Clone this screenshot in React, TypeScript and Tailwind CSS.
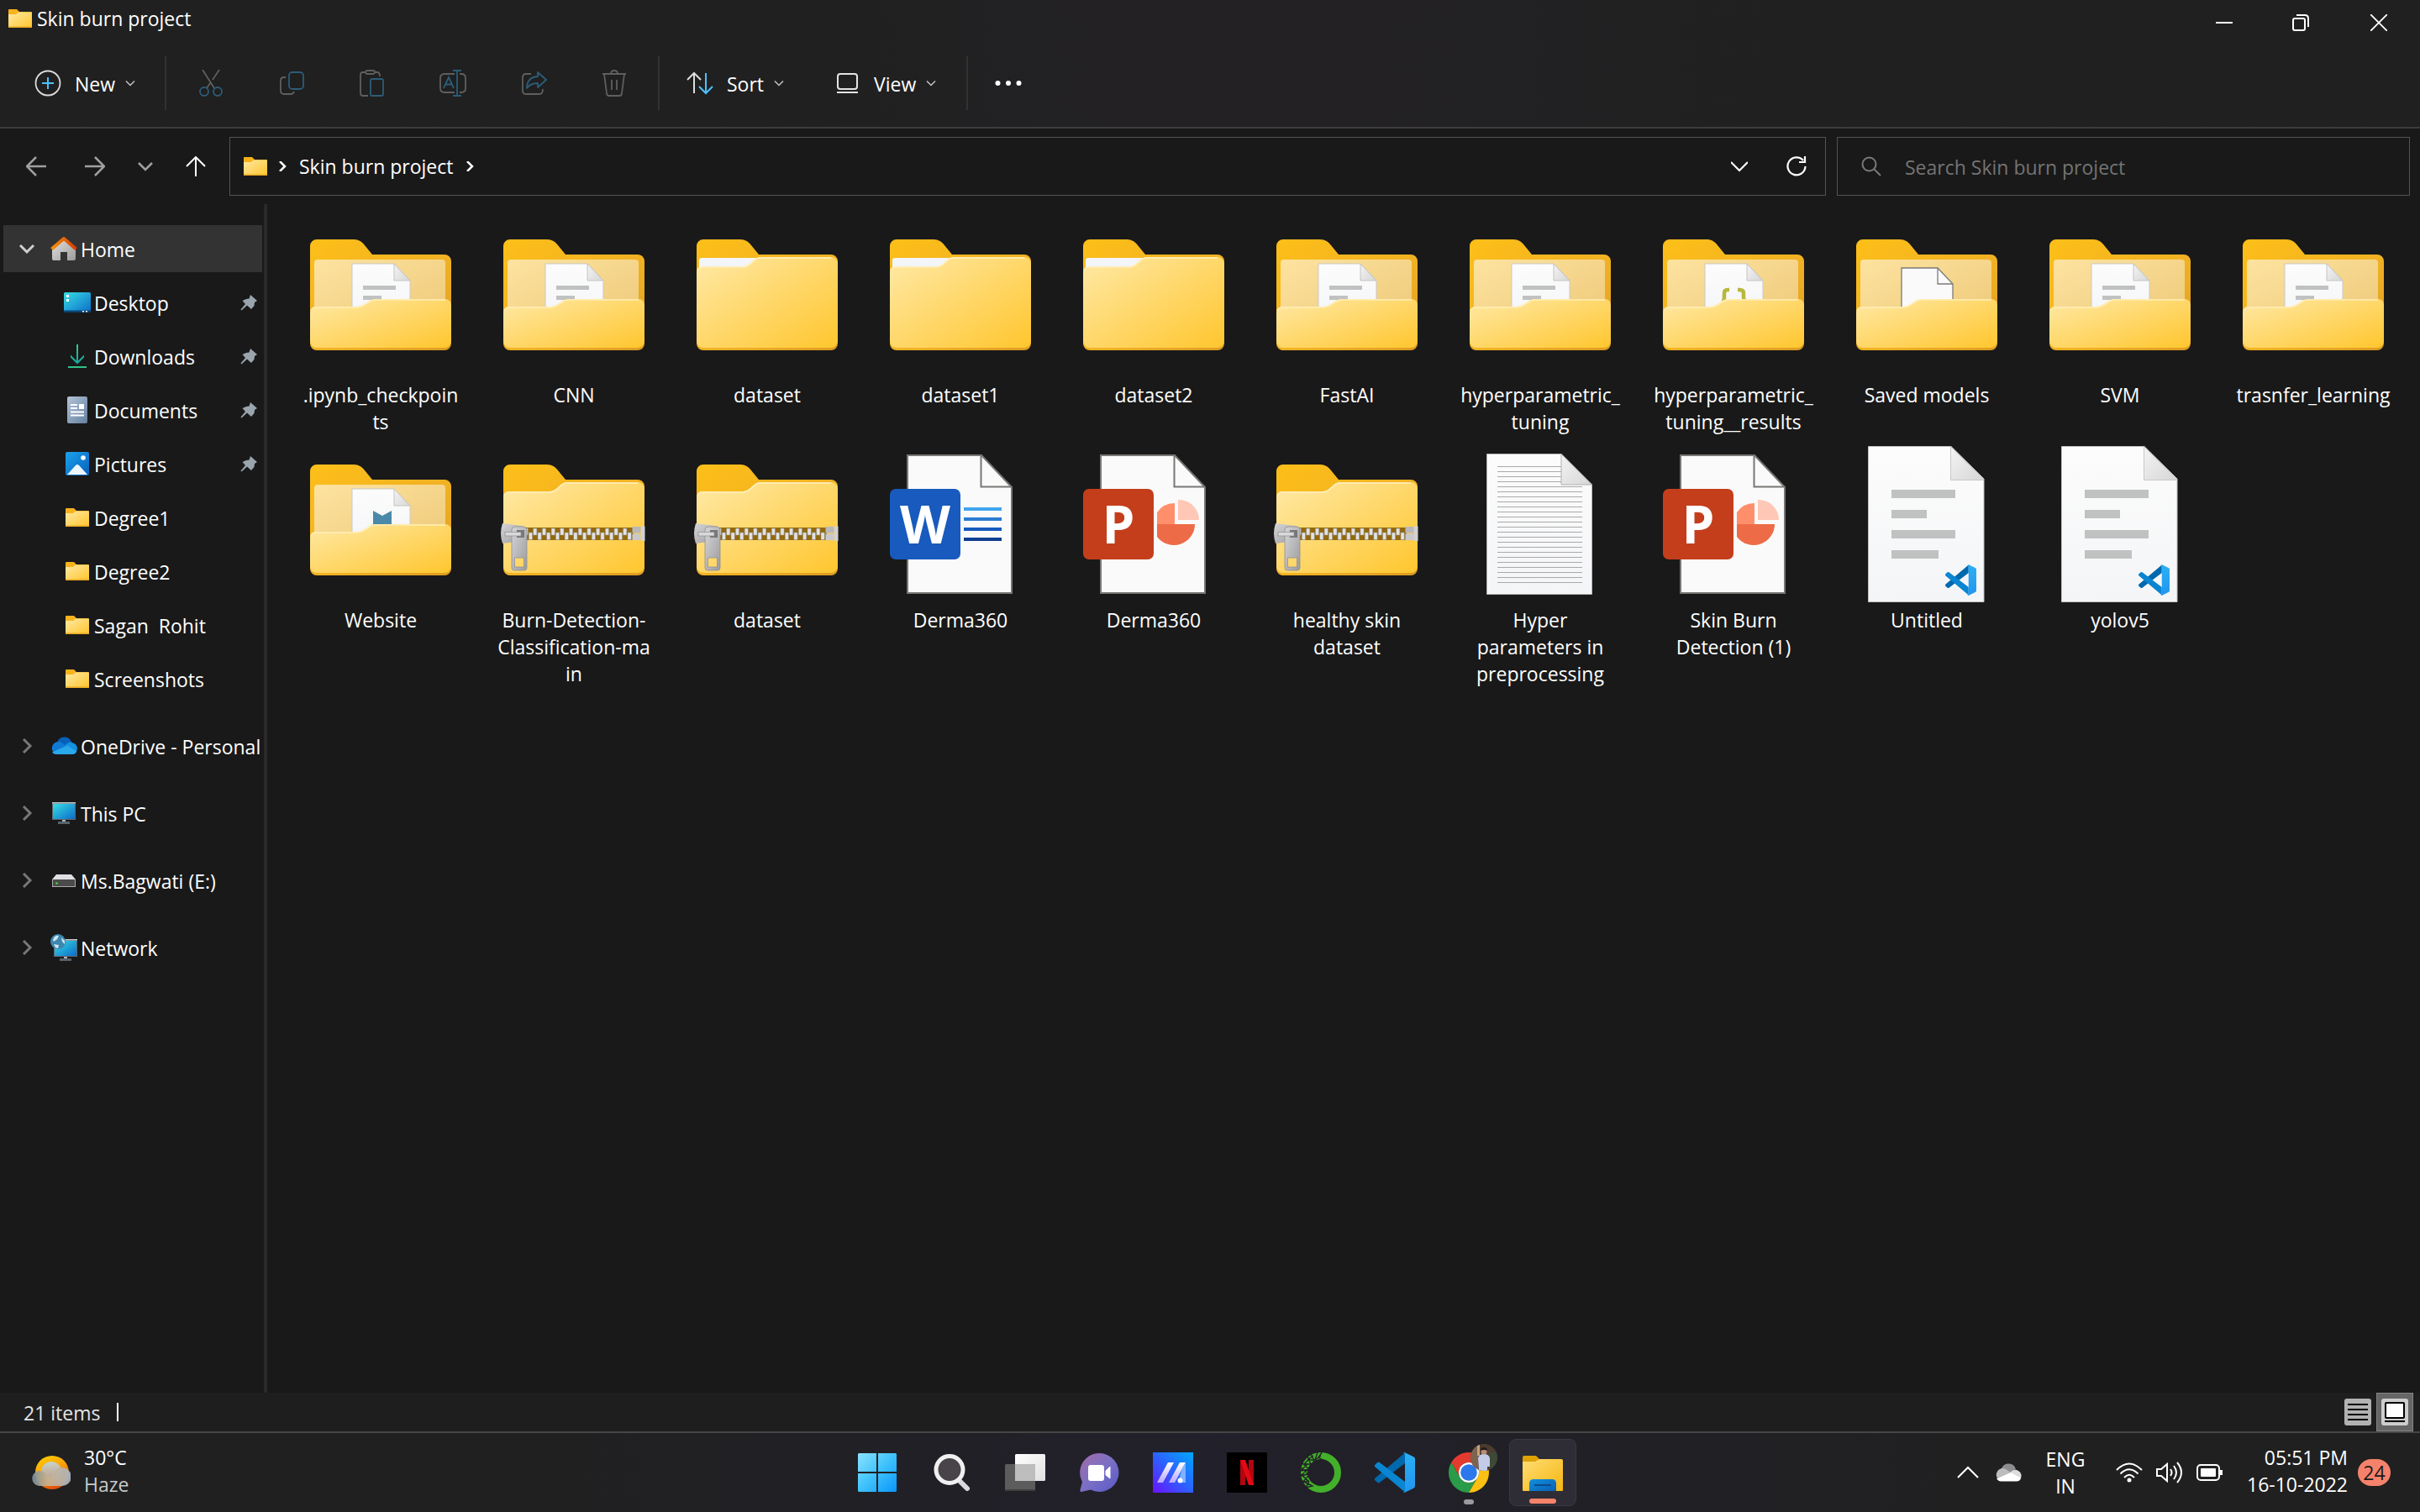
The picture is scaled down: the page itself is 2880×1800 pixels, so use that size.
import { FC, ReactNode } from "react";

type IconProps = { className?: string };

/* ---------- shared gradients ---------- */

const Gradients: FC = () => (
  <svg className="absolute h-0 w-0" aria-hidden="true">
    <defs>
      <linearGradient id="folderBack" x1="0" y1="0" x2="1" y2="1">
        <stop offset="0" stopColor="#fdbf18" />
        <stop offset="0.6" stopColor="#f0b024" />
        <stop offset="1" stopColor="#dc9c22" />
      </linearGradient>
      <linearGradient id="folderFront" x1="0" y1="0" x2="1" y2="1">
        <stop offset="0" stopColor="#ffe9a6" />
        <stop offset="1" stopColor="#ffc62e" />
      </linearGradient>
      <linearGradient id="folderInner" x1="0" y1="0" x2="1" y2="1">
        <stop offset="0" stopColor="#fde3a0" />
        <stop offset="1" stopColor="#edc878" />
      </linearGradient>
      <linearGradient id="paper" x1="0" y1="0" x2="0" y2="1">
        <stop offset="0" stopColor="#fcfcfc" />
        <stop offset="1" stopColor="#f4f5f7" />
      </linearGradient>
      <linearGradient id="fold" x1="0" y1="0" x2="1" y2="1">
        <stop offset="0" stopColor="#f4f4f4" />
        <stop offset="1" stopColor="#d6d6d6" />
      </linearGradient>
      <linearGradient id="metal" x1="0" y1="0" x2="1" y2="1">
        <stop offset="0" stopColor="#d6d6d8" />
        <stop offset="1" stopColor="#9b9b9e" />
      </linearGradient>
      <linearGradient id="screen" x1="0" y1="0" x2="1" y2="1">
        <stop offset="0" stopColor="#38dce4" />
        <stop offset="1" stopColor="#0b6cc9" />
      </linearGradient>
      <linearGradient id="picture" x1="0" y1="0" x2="1" y2="1">
        <stop offset="0" stopColor="#1aa3ec" />
        <stop offset="1" stopColor="#0a5fbd" />
      </linearGradient>
      <linearGradient id="docBlue" x1="0" y1="0" x2="1" y2="1">
        <stop offset="0" stopColor="#b5c4d8" />
        <stop offset="1" stopColor="#63809f" />
      </linearGradient>
      <linearGradient id="download" x1="0" y1="0" x2="0" y2="1">
        <stop offset="0" stopColor="#36c98a" />
        <stop offset="1" stopColor="#14a5a0" />
      </linearGradient>
      <linearGradient id="roof" x1="0" y1="0" x2="1" y2="0">
        <stop offset="0" stopColor="#f79009" />
        <stop offset="1" stopColor="#d63c07" />
      </linearGradient>
      <linearGradient id="house" x1="0" y1="0" x2="1" y2="1">
        <stop offset="0" stopColor="#e2e2e2" />
        <stop offset="1" stopColor="#9b9b9b" />
      </linearGradient>
      <linearGradient id="start" gradientUnits="userSpaceOnUse" x1="0" y1="0" x2="46" y2="46">
        <stop offset="0" stopColor="#8be2ff" />
        <stop offset="0.5" stopColor="#3fc2fb" />
        <stop offset="1" stopColor="#0a96fa" />
      </linearGradient>
      <linearGradient id="chat" x1="0" y1="0" x2="1" y2="1">
        <stop offset="0" stopColor="#a36ba8" />
        <stop offset="0.5" stopColor="#7a70c4" />
        <stop offset="1" stopColor="#5a58c8" />
      </linearGradient>
      <linearGradient id="myasus" x1="0" y1="1" x2="1" y2="0">
        <stop offset="0" stopColor="#6a12ff" />
        <stop offset="0.5" stopColor="#2c62ff" />
        <stop offset="1" stopColor="#00a8ff" />
      </linearGradient>
      <linearGradient id="slash" x1="0" y1="0" x2="0" y2="1">
        <stop offset="0" stopColor="#ffffff" />
        <stop offset="1" stopColor="#b9a8ff" />
      </linearGradient>
      <linearGradient id="explorer" x1="0" y1="0" x2="1" y2="1">
        <stop offset="0" stopColor="#ffdd75" />
        <stop offset="1" stopColor="#f6b60f" />
      </linearGradient>
      <linearGradient id="explorerTray" x1="0" y1="0" x2="1" y2="1">
        <stop offset="0" stopColor="#1290dc" />
        <stop offset="1" stopColor="#0960b4" />
      </linearGradient>
      <linearGradient id="sun" x1="0" y1="0" x2="0.5" y2="1">
        <stop offset="0" stopColor="#ffd400" />
        <stop offset="0.5" stopColor="#f9a40b" />
        <stop offset="1" stopColor="#e2500a" />
      </linearGradient>
      <linearGradient id="haze" x1="0" y1="0" x2="0" y2="1">
        <stop offset="0" stopColor="#c3d6de" />
        <stop offset="1" stopColor="#b79b93" />
      </linearGradient>
      <linearGradient id="hazeSide" x1="0" y1="0" x2="1" y2="0">
        <stop offset="0" stopColor="#78909f" />
        <stop offset="0.4" stopColor="#c9b18d" />
        <stop offset="1" stopColor="#a9b9c6" />
      </linearGradient>
      <linearGradient id="taskWhite" x1="0" y1="0" x2="1" y2="1">
        <stop offset="0" stopColor="#ffffff" />
        <stop offset="1" stopColor="#e0e0e0" />
      </linearGradient>
      <linearGradient id="vsPanel" x1="0" y1="0" x2="0" y2="1">
        <stop offset="0" stopColor="#2bb0f5" />
        <stop offset="1" stopColor="#2196ee" />
      </linearGradient>
    </defs>
  </svg>
);

/* ---------- file icons ---------- */

const FOLDER_BACK =
  "M20 25H64C70 25 74 28 77 32L86 43H172A8 8 0 0 1 180 51V149A8 8 0 0 1 172 157H20A8 8 0 0 1 12 149V33A8 8 0 0 1 20 25Z";
const FRONT_CLOSED =
  "M19 57H66C78 57 78 46 88 46H172A8 8 0 0 1 180 54V146A8 8 0 0 1 172 154H20A8 8 0 0 1 12 146V64A7 7 0 0 1 19 57Z";
const FRONT_OPEN =
  "M19 105H66C79 105 80 96 90 96H173A7 7 0 0 1 180 103V146A8 8 0 0 1 172 154H20A8 8 0 0 1 12 146V112A7 7 0 0 1 19 105Z";

const FolderIcon: FC = () => (
  <svg viewBox="0 0 192 192" className="h-48 w-48">
    <path d={FOLDER_BACK} fill="url(#folderBack)" />
    <path d="M18 47H86L78 60H15V50A3 3 0 0 1 18 47Z" fill="#f3f5f8" />
    <path d={FRONT_CLOSED} fill="url(#folderFront)" />
    <path d="M13 62A6 6 0 0 1 19 58H66C78 58 78 47 88 47H172" fill="none" stroke="#fff0c0" strokeWidth="1.5" />
  </svg>
);

const OpenFolderIcon: FC<{ children: ReactNode }> = ({ children }) => (
  <svg viewBox="0 0 192 192" className="h-48 w-48">
    <path d={FOLDER_BACK} fill="url(#folderBack)" />
    <rect x="17" y="49" width="156" height="80" rx="4" fill="url(#folderInner)" />
    {children}
    <path d={FRONT_OPEN} fill="url(#folderFront)" />
    <path d="M13 110A6 6 0 0 1 19 106H66C79 106 80 97 90 97H173" fill="none" stroke="#ffeeb8" strokeWidth="1.5" />
  </svg>
);

const InnerPage: FC<{ children?: ReactNode }> = ({ children }) => (
  <>
    <path d="M62 54H112L131 74V120H62Z" fill="url(#paper)" stroke="#c9c9c9" strokeWidth="1" />
    <path d="M112 54V74H131Z" fill="url(#fold)" stroke="#c4c4c4" strokeWidth="1" />
    {children}
  </>
);

const TextFolderIcon: FC = () => (
  <OpenFolderIcon>
    <InnerPage>
      <path d="M75 80H114V85H75ZM75 92H97V97H75Z" fill="#c0c1c1" />
    </InnerPage>
  </OpenFolderIcon>
);

const JsonFolderIcon: FC = () => (
  <OpenFolderIcon>
    <InnerPage>
      <path
        d="M91 85H89Q85 85 85 89V94Q85 99 82 99M101 85H103Q108 85 108 89V94Q108 98 111 98"
        fill="none"
        stroke="#b7b83c"
        strokeWidth="4.5"
      />
    </InnerPage>
  </OpenFolderIcon>
);

const WebFolderIcon: FC = () => (
  <OpenFolderIcon>
    <InnerPage>
      <path d="M87 80L98 86L109 80V100H87Z" fill="#4a8aa8" />
    </InnerPage>
  </OpenFolderIcon>
);

const BlankFolderIcon: FC = () => (
  <OpenFolderIcon>
    <path d="M66 59H109L127 78V120H66Z" fill="#fafafa" stroke="#7b7a77" strokeWidth="1.3" />
    <path d="M109 59V78H127" fill="none" stroke="#7b7a77" strokeWidth="1.3" />
  </OpenFolderIcon>
);

const ZipIcon: FC = () => (
  <svg viewBox="0 0 192 192" className="h-48 w-48">
    <path d={FOLDER_BACK} fill="url(#folderBack)" />
    <path d={FRONT_CLOSED} fill="url(#folderFront)" />
    <path d="M13 62A6 6 0 0 1 19 58H66C78 58 78 47 88 47H172" fill="none" stroke="#fff0c0" strokeWidth="1.5" />
    <rect x="36" y="100" width="131" height="15" fill="#94690c" />
    {Array.from({ length: 12 }, (_, i) => (
      <g key={i} fill="#e2e2e2" stroke="#8d8d8d" strokeWidth="0.5">
        <rect x={37 + i * 10.7} y="101" width="4.2" height="8" />
        <rect x={42.3 + i * 10.7} y="106" width="4.2" height="8.5" />
      </g>
    ))}
    <path d="M11 95L34 98Q37 98 37 101V113Q37 116 34 116L11 119Q7 107 11 95Z" fill="url(#metal)" />
    <path
      d="M26 99H36Q40 99 40 103V148Q40 151 37 151H25Q22 151 22 148V103Q22 99 26 99ZM25.5 136V147H36.5V136Z"
      fill="url(#metal)"
      fillRule="evenodd"
      stroke="#8f8f92"
      strokeWidth="0.8"
    />
    <rect x="28" y="103" width="9" height="9" fill="#77777a" />
    <rect x="14" y="105.5" width="19" height="4.5" fill="#d9d9da" stroke="#8f8f92" strokeWidth="0.7" />
    <rect x="165.5" y="99" width="10" height="7.5" fill="#b9b9bc" />
    <rect x="165.5" y="107.5" width="10" height="7.5" fill="#c9c9cb" />
    <rect x="176" y="98.5" width="4.5" height="17.5" fill="#d2d2d4" />
  </svg>
);

const OfficePage: FC<{ children: ReactNode }> = ({ children }) => (
  <svg viewBox="0 0 192 192" className="h-48 w-48">
    <path d="M33 14H121L157 52V178H33Z" fill="#fafafa" stroke="#797774" strokeWidth="2" />
    <path d="M120.5 14V51.5H157" fill="none" stroke="#797774" strokeWidth="2" />
    {children}
  </svg>
);

const WordIcon: FC = () => (
  <OfficePage>
    <rect x="100" y="76" width="45" height="4" fill="#41a5ee" />
    <rect x="100" y="88" width="45" height="4" fill="#2b7cd3" />
    <rect x="100" y="100" width="45" height="4" fill="#185abd" />
    <rect x="100" y="112" width="45" height="4" fill="#103f91" />
    <rect x="12" y="54" width="84" height="84" rx="7" fill="#185abd" />
    <text x="54" y="119" textAnchor="middle" fontSize="62" fontWeight="700" fill="#fff">
      W
    </text>
  </OfficePage>
);

const PowerPointIcon: FC = () => (
  <OfficePage>
    <path d="M121 96V71A25 25 0 0 0 100 82V96Z" fill="#ff8f6b" />
    <path d="M100 96H145A25 25 0 0 1 100 111Z" fill="#ed6c47" />
    <path d="M125 67A24 24 0 0 1 150 91H125Z" fill="#ffc7b5" />
    <rect x="12" y="54" width="84" height="84" rx="7" fill="#c43e1c" />
    <text x="54" y="119" textAnchor="middle" fontSize="62" fontWeight="700" fill="#fff">
      P
    </text>
  </OfficePage>
);

const TextFileIcon: FC = () => (
  <svg viewBox="0 0 192 192" className="h-48 w-48">
    <path d="M32.5 12.5H121L157.5 49V179.5H32.5Z" fill="url(#paper)" stroke="#b5b5b5" />
    {Array.from({ length: 24 }, (_, i) => (
      <rect key={i} x="45" y={27 + i * 6} width={i < 4 ? 76 : 101} height="1" fill="#a9a9a9" />
    ))}
    <path d="M121 12.5V49H157.5Z" fill="url(#fold)" stroke="#b0b0b0" />
  </svg>
);

const VsCodeShapes: FC = () => (
  <>
    <path d="M18 .3L.33 15.26a1 1 0 0 0 0 1.48L1.65 17.94a1 1 0 0 0 1.28.06L18 6.55Z" fill="#0069ad" />
    <path d="M18 23.7L.33 8.74a1 1 0 0 1 0-1.48L1.65 6.06a1 1 0 0 1 1.28-.06L18 17.45Z" fill="#0a85d1" />
    <path
      d="M18.21.21L23.15 2.59A1.5 1.5 0 0 1 24 3.94V20.06a1.5 1.5 0 0 1-.85 1.35L18.21 23.79a1.49 1.49 0 0 1-1.7-.29c.55.55 1.49.16 1.49-.62V1.12c0-.78-.94-1.17-1.49-.62A1.49 1.49 0 0 1 18.21.21Z"
      fill="url(#vsPanel)"
    />
  </>
);

const VsCodeFileIcon: FC = () => (
  <svg viewBox="0 0 192 192" className="h-48 w-48">
    <path d="M26.5 3.5H125L164 42V188.5H26.5Z" fill="url(#paper)" stroke="#c0c0c0" />
    <path d="M124.5 3.5V43.5H164Z" fill="url(#fold)" stroke="#c8c8c8" />
    <path d="M54 55H130V65H54ZM54 79H96V89H54ZM54 103H130V113H54ZM54 127H110V137H54Z" fill="#c0c1c1" />
    <svg x="118" y="144" width="37" height="37" viewBox="0 0 24 24">
      <VsCodeShapes />
    </svg>
  </svg>
);

/* ---------- sidebar icons ---------- */

const SmallFolder: FC<IconProps> = ({ className = "h-8 w-8" }) => (
  <svg viewBox="0 0 32 32" className={className}>
    <path d="M3 5H12L15 8H29A1 1 0 0 1 30 9V27H2V6A1 1 0 0 1 3 5Z" fill="#f8b21c" />
    <path d="M2 11H11L14 8.5H29A1 1 0 0 1 30 9.5V26H3A1 1 0 0 1 2 25Z" fill="url(#folderFront)" />
    <path d="M2 25.5H30V26.5H2Z" fill="#e0a526" />
  </svg>
);

const HomeIcon: FC = () => (
  <svg viewBox="0 0 32 32" className="h-8 w-8">
    <path d="M2 14L16 4L30 14V28A2 2 0 0 1 28 30H20V20H12V30H4A2 2 0 0 1 2 28Z" fill="url(#house)" />
    <path d="M1.5 16.5L16 4L30.5 16.5" fill="none" stroke="url(#roof)" strokeWidth="4" strokeLinejoin="round" />
  </svg>
);

const DesktopIcon: FC = () => (
  <svg viewBox="0 0 32 32" className="h-8 w-8">
    <rect y="4" width="32" height="24" rx="1.5" fill="url(#screen)" />
    <path d="M0 25.5H32V27A1 1 0 0 1 31 28H1A1 1 0 0 1 0 27Z" fill="#0c4474" />
    <path d="M3 7H6V10H3ZM3 12H6V15H3ZM22 26H24V27.5H22ZM26 26H28V27.5H26Z" fill="#fff" />
  </svg>
);

const DownloadsIcon: FC = () => (
  <svg viewBox="0 0 32 32" className="h-8 w-8">
    <path d="M15 2H17V21.5L24 14.5V17.5L16 25.5L8 17.5V14.5L15 21.5Z" fill="url(#download)" />
    <rect x="5" y="28" width="22" height="2" fill="#2fc389" />
  </svg>
);

const DocumentsIcon: FC = () => (
  <svg viewBox="0 0 32 32" className="h-8 w-8">
    <rect x="4" width="24" height="32" rx="2" fill="url(#docBlue)" />
    <path d="M8 9H16V11H8ZM8 13H16V15H8ZM18 9H24V15H18ZM8 17.5H24V19.5H8ZM8 21.5H24V23.5H8Z" fill="#fff" />
  </svg>
);

const PicturesIcon: FC = () => (
  <svg viewBox="0 0 32 32" className="h-8 w-8">
    <rect x="2" y="2" width="28" height="28" rx="2" fill="url(#picture)" />
    <path d="M4 29L14 18Q16 16 18 18L28 29Z" fill="#eef6fd" />
    <circle cx="23" cy="9" r="2.8" fill="#fff" />
  </svg>
);

const OneDriveIcon: FC = () => (
  <svg viewBox="0 0 32 32" className="h-8 w-8">
    <path d="M8 12A9 9 0 0 1 25 11L28 16L12 20Z" fill="#0860b8" />
    <path d="M7 26A7 7 0 1 1 12 11.5L24 19Z" fill="#0f7bd6" />
    <path d="M18 15Q22 9.500 27 12.5A7 7 0 0 1 30 24L18 20Z" fill="#1390e0" />
    <path d="M2 23.5L20 15.5L31 22.5Q30 26 26 26H7Q4 26 2 23.5Z" fill="#2aa8ec" />
  </svg>
);

const MonitorShapes: FC = () => (
  <>
    <rect x="2" y="3" width="28" height="21" fill="#5f666c" />
    <path d="M2 3H30V4.5H2Z" fill="#c3c9cd" />
    <rect x="3" y="5" width="26" height="18" fill="url(#screen)" />
    <path d="M14 24H18V26.5H14Z" fill="#aab2b8" />
    <path d="M9 26H23V29H9Z" fill="#58626a" />
  </>
);

const ThisPcIcon: FC = () => (
  <svg viewBox="0 0 32 32" className="h-8 w-8">
    <MonitorShapes />
  </svg>
);

const DriveIcon: FC = () => (
  <svg viewBox="0 0 32 32" className="h-8 w-8">
    <path d="M7 9H25L30 15H2Z" fill="#dfe0e3" />
    <rect x="2" y="15" width="28" height="9" fill="#4b4b4b" />
    <path d="M2 23H30V24H2ZM2 15H3V24H2ZM29 15H30V24H29Z" fill="#aaaaaa" />
    <circle cx="7.5" cy="19.5" r="1.3" fill="#3fe03a" />
  </svg>
);

const NetworkIcon: FC = () => (
  <svg viewBox="0 0 32 32" className="h-8 w-8 overflow-visible">
    <g transform="translate(2 3)">
      <MonitorShapes />
    </g>
    <circle cx="9" cy="9" r="9" fill="#3d86ad" />
    <path d="M3 7Q5 1 10 2L8 6L4 9ZM13 4L17 8V12L14 9ZM4 12L10 13L9 17L6 16Z" fill="#cfe6f0" />
  </svg>
);

const PinIcon: FC = () => (
  <svg viewBox="0 0 20 20" className="h-5 w-5">
    <path d="M12 1L20 8L17 10L16.5 14L13 18L8 13.5L1.5 19.5L0.5 18.5L6 12L2.5 8L7 6L10.5 5.5Z" fill="#9aa4ad" />
  </svg>
);

/* ---------- command bar icons ---------- */

const BAR_ICON = "h-8 w-8 fill-none";
const GREY = "#5f5f5f";
const BLUE = "#2c5c78";

const ChevronDown: FC<IconProps> = ({ className = "h-3 w-3 text-[#c4c4c4]" }) => (
  <svg viewBox="0 0 12 12" className={className} fill="none" stroke="currentColor" strokeWidth="1.5">
    <path d="M1 3.5L6 8.5L11 3.5" />
  </svg>
);

const disabledCommands = [
  {
    label: "Cut",
    icon: (
      <svg viewBox="0 0 32 32" className={BAR_ICON} strokeWidth="1.8">
        <path d="M6 0L20 22M26 0L18 12M15 16L11 22" stroke={GREY} />
        <circle cx="8" cy="26" r="5" stroke={BLUE} />
        <circle cx="24" cy="26" r="5" stroke={BLUE} />
      </svg>
    ),
  },
  {
    label: "Copy",
    icon: (
      <svg viewBox="0 0 32 32" className={BAR_ICON} strokeWidth="1.8">
        <path d="M9 9H7Q3 9 3 13V25Q3 29 7 29H15Q18 29 19 26" stroke={GREY} />
        <rect x="13" y="3" width="17" height="20" rx="4" stroke={BLUE} />
      </svg>
    ),
  },
  {
    label: "Paste",
    icon: (
      <svg viewBox="0 0 32 32" className={BAR_ICON} strokeWidth="1.8">
        <path d="M8 3H5Q2 3 2 6V28Q2 31 5 31H11M19 3H22Q25 3 25 8" stroke={GREY} />
        <rect x="8" y="1" width="11" height="4" rx="2" stroke={GREY} />
        <rect x="14" y="11" width="15" height="20" rx="2" stroke={BLUE} />
      </svg>
    ),
  },
  {
    label: "Rename",
    icon: (
      <svg viewBox="0 0 32 32" className={BAR_ICON} strokeWidth="1.8">
        <path d="M18 5H6Q1 5 1 10V22Q1 27 6 27H18M24 5H26Q31 5 31 10V22Q31 27 26 27H24" stroke={GREY} />
        <path d="M16 1H26M16 31H26M21 1V31M5 22L11 9L17 22M7.5 17.5H14.5" stroke={BLUE} />
      </svg>
    ),
  },
  {
    label: "Share",
    icon: (
      <svg viewBox="0 0 32 32" className={BAR_ICON} strokeWidth="1.8">
        <path d="M13 5H7Q3 5 3 9V25Q3 29 7 29H23Q27 29 27 23" stroke={GREY} />
        <path d="M21 3L31 12L21 21V16Q12 16 8 22Q8 9 21 8Z" stroke={BLUE} strokeLinejoin="round" />
      </svg>
    ),
  },
  {
    label: "Delete",
    icon: (
      <svg viewBox="0 0 32 32" className={BAR_ICON} strokeWidth="1.8" stroke={GREY}>
        <path d="M2 5H30M12 5Q12 1 16 1T20 5M4 5L7 28Q7 31 10 31H22Q25 31 25 28L28 5M13 12V24M19 12V24" />
      </svg>
    ),
  },
];

/* ---------- taskbar icons ---------- */

const StartIcon: FC = () => (
  <svg viewBox="-1 -1 48 48" className="h-12 w-12">
    <path d="M1 0H22V22H0V1ZM24 0H45L46 1V22H24ZM0 24H22V46H1L0 45ZM24 24H46V45L45 46H24Z" fill="url(#start)" />
  </svg>
);

const SearchTaskIcon: FC = () => (
  <svg viewBox="0 0 48 48" className="h-12 w-12">
    <path d="M34 34L43 43" stroke="#d7d9dc" strokeWidth="6" strokeLinecap="round" />
    <circle cx="22" cy="20.5" r="16" fill="#48444a" stroke="#f0f0f1" strokeWidth="5" />
  </svg>
);

const TaskViewIcon: FC = () => (
  <svg viewBox="0 0 48 48" className="h-12 w-12">
    <rect x="12" y="2" width="36" height="32" rx="1.5" fill="url(#taskWhite)" />
    <rect y="14" width="36" height="32" rx="1.5" fill="#5c5c5c" />
    <path d="M12 14H35Q36 14 36 15V34H12Z" fill="#bdbdbd" />
    <path d="M0 44H36Q36 46 34 46H2Q0 46 0 44Z" fill="#3f3f3f" />
  </svg>
);

const ChatIcon: FC = () => (
  <svg viewBox="0 0 48 48" className="h-12 w-12">
    <path d="M24 1A23 23 0 1 1 14 44.5L3 47Q1 47 1.5 44.5L4 35A23 23 0 0 1 24 1Z" fill="url(#chat)" />
    <rect x="11" y="15" width="19" height="19" rx="3" fill="#fff" />
    <path d="M32 22L37 17V31L32 27Z" fill="#fff" stroke="#fff" strokeWidth="1" strokeLinejoin="round" />
  </svg>
);

const MyAsusIcon: FC = () => (
  <svg viewBox="0 0 48 48" className="h-12 w-12">
    <rect width="48" height="48" fill="url(#myasus)" />
    <path d="M18 12H25L12 36H5ZM32 12H39L26 36H19Z" fill="url(#slash)" />
    <path d="M35 19L39 12V36H30Z" fill="#7fb2ff" />
    <circle cx="32.5" cy="33.5" r="3" fill="#fff" />
  </svg>
);

const NetflixIcon: FC = () => (
  <svg viewBox="0 0 48 48" className="h-12 w-12">
    <rect width="48" height="48" fill="#000" />
    <rect x="16" y="9" width="6" height="30" fill="#b1060f" />
    <rect x="26" y="9" width="6" height="30" fill="#b1060f" />
    <path d="M16 9H22L32 39H26Z" fill="#e50914" />
  </svg>
);

const AnacondaIcon: FC = () => (
  <svg viewBox="0 0 48 48" className="h-12 w-12">
    <circle cx="24" cy="24" r="20" fill="none" stroke="#43b02a" strokeWidth="8" />
    <path
      d="M25 0L21 6L26 9M20 0L17 9L24 4M12 2L16 10L9 8L15 4M8 5L12 14L4 14L10 8M2 13L10 20L0 22L8 14M0 18L9 26L0 28L9 20M0 26L9 34L2 36L9 28M2 34L14 40L6 42L10 34"
      fill="none"
      stroke="#211f27"
      strokeWidth="1.4"
    />
  </svg>
);

const VsCodeIcon: FC = () => (
  <svg viewBox="0 0 24 24" className="h-12 w-12">
    <VsCodeShapes />
  </svg>
);

const ChromeIcon: FC = () => (
  <svg viewBox="0 0 48 48" className="h-12 w-12 overflow-visible">
    <path d="M24 12H44.78A24 24 0 0 0 3.22 12L13.6 30A12 12 0 0 1 24 12Z" fill="#e53b2e" />
    <path d="M3.22 12A24 24 0 0 0 24 48L34.4 30A12 12 0 0 1 13.6 30Z" fill="#2a9b48" />
    <path d="M44.78 12A24 24 0 0 1 24 48L34.4 30A12 12 0 0 0 24 12Z" fill="#fcc012" />
    <circle cx="24" cy="24" r="12" fill="#fff" />
    <circle cx="24" cy="24" r="9.8" fill="#2b78ec" />
    <clipPath id="avatar">
      <circle cx="42" cy="6" r="16" />
    </clipPath>
    <g clipPath="url(#avatar)">
      <rect x="26" y="-10" width="32" height="32" fill="#4b3c30" />
      <rect x="26" y="-10" width="9" height="32" fill="#7d6350" />
      <rect x="34" y="-10" width="3" height="14" fill="#c9a27c" />
      <rect x="48" y="0" width="10" height="22" fill="#3c4a36" />
      <path d="M35 7Q36 2 42 2T49 7V17H46V22H36Z" fill="#c3cbe8" />
      <circle cx="42" cy="-1" r="3.5" fill="#b98c78" />
      <path d="M38 -2Q38 -6 42 -6T46 -2Q42 -4 38 -2Z" fill="#221a1a" />
    </g>
  </svg>
);

const ExplorerIcon: FC = () => (
  <svg viewBox="0 0 48 48" className="h-12 w-12">
    <path d="M2 4H16L20 8V14H0V6Q0 4 2 4Z" fill="#dfa104" />
    <path d="M0 11H15L20 8H46Q48 8 48 10V45Q48 46 47 46H1Q0 46 0 45Z" fill="url(#explorer)" />
    <path d="M8 46V37Q8 32 13 32H35Q40 32 40 37V46Z" fill="url(#explorerTray)" />
    <rect x="14" y="38" width="20" height="2" fill="#0b4a8c" />
  </svg>
);

/* ---------- data ---------- */

// names carry their own line breaks, the way the icon view wraps them
const files: { name: string; icon: ReactNode }[] = [
  { name: ".ipynb_checkpoin\nts", icon: <TextFolderIcon /> },
  { name: "CNN", icon: <TextFolderIcon /> },
  { name: "dataset", icon: <FolderIcon /> },
  { name: "dataset1", icon: <FolderIcon /> },
  { name: "dataset2", icon: <FolderIcon /> },
  { name: "FastAI", icon: <TextFolderIcon /> },
  { name: "hyperparametric_\ntuning", icon: <TextFolderIcon /> },
  { name: "hyperparametric_\ntuning__results", icon: <JsonFolderIcon /> },
  { name: "Saved models", icon: <BlankFolderIcon /> },
  { name: "SVM", icon: <TextFolderIcon /> },
  { name: "trasnfer_learning", icon: <TextFolderIcon /> },
  { name: "Website", icon: <WebFolderIcon /> },
  { name: "Burn-Detection-\nClassification-ma\nin", icon: <ZipIcon /> },
  { name: "dataset", icon: <ZipIcon /> },
  { name: "Derma360", icon: <WordIcon /> },
  { name: "Derma360", icon: <PowerPointIcon /> },
  { name: "healthy skin\ndataset", icon: <ZipIcon /> },
  { name: "Hyper\nparameters in\npreprocessing", icon: <TextFileIcon /> },
  { name: "Skin Burn\nDetection (1)", icon: <PowerPointIcon /> },
  { name: "Untitled", icon: <VsCodeFileIcon /> },
  { name: "yolov5", icon: <VsCodeFileIcon /> },
];

const quickAccess = [
  { name: "Desktop", icon: <DesktopIcon />, pinned: true },
  { name: "Downloads", icon: <DownloadsIcon />, pinned: true },
  { name: "Documents", icon: <DocumentsIcon />, pinned: true },
  { name: "Pictures", icon: <PicturesIcon />, pinned: true },
  { name: "Degree1", icon: <SmallFolder />, pinned: false },
  { name: "Degree2", icon: <SmallFolder />, pinned: false },
  { name: "Sagan  Rohit", icon: <SmallFolder />, pinned: false },
  { name: "Screenshots", icon: <SmallFolder />, pinned: false },
];

const places = [
  { name: "OneDrive - Personal", icon: <OneDriveIcon /> },
  { name: "This PC", icon: <ThisPcIcon /> },
  { name: "Ms.Bagwati (E:)", icon: <DriveIcon /> },
  { name: "Network", icon: <NetworkIcon /> },
];

const apps = [
  { name: "Start", icon: <StartIcon /> },
  { name: "Search", icon: <SearchTaskIcon /> },
  { name: "Task view", icon: <TaskViewIcon /> },
  { name: "Chat", icon: <ChatIcon /> },
  { name: "MyASUS", icon: <MyAsusIcon /> },
  { name: "Netflix", icon: <NetflixIcon /> },
  { name: "Anaconda", icon: <AnacondaIcon /> },
  { name: "Visual Studio Code", icon: <VsCodeIcon /> },
  { name: "Google Chrome", icon: <ChromeIcon />, state: "open" },
  { name: "File Explorer", icon: <ExplorerIcon />, state: "active" },
];

/* ---------- sections ---------- */

const TitleBar: FC = () => (
  <div className="flex h-14 items-start justify-between">
    <div className="flex items-start gap-1 pt-1.5 pl-2">
      <SmallFolder />
      <h1 className="leading-8">Skin burn project</h1>
    </div>
    <div className="flex">
      <button aria-label="Minimize" className="flex h-[54px] w-[94px] items-center justify-center">
        <svg viewBox="0 0 20 20" className="h-5 w-5">
          <path d="M0 9H20V11H0Z" fill="#fff" />
        </svg>
      </button>
      <button aria-label="Restore" className="flex h-[54px] w-[88px] items-center justify-center">
        <svg viewBox="0 0 20 20" className="h-5 w-5" fill="none" stroke="#fff" strokeWidth="2">
          <rect x="1" y="5" width="14" height="14" rx="2" />
          <path d="M5 1H15Q19 1 19 5V15" />
        </svg>
      </button>
      <button aria-label="Close" className="flex h-[54px] w-[98px] items-center justify-center">
        <svg viewBox="0 0 20 20" className="h-5 w-5" stroke="#fff" strokeWidth="1.8">
          <path d="M0 0L20 20M20 0L0 20" />
        </svg>
      </button>
    </div>
  </div>
);

const CommandBar: FC = () => (
  <div className="flex h-[95px] items-start pt-[11px]">
    <div className="flex h-16 w-[198px] border-r-2 border-[#323232]">
      <button className="flex items-center pl-[41px]">
        <svg viewBox="0 0 32 32" className={BAR_ICON} strokeWidth="1.8">
          <circle cx="16" cy="16" r="14.5" stroke="#dcdcdc" />
          <path d="M16 9V23M9 16H23" stroke="#4cc2ff" strokeWidth="2" />
        </svg>
        <span className="mr-3 ml-4 pt-0.5">New</span>
        <ChevronDown />
      </button>
    </div>
    <div className="flex h-16 w-[587px] justify-center border-r-2 border-[#323232]">
      {disabledCommands.map(({ label, icon }) => (
        <button key={label} disabled aria-label={label} className="flex w-24 items-center justify-center">
          {icon}
        </button>
      ))}
    </div>
    <div className="flex h-16 w-[367px] gap-[59px] border-r-2 border-[#323232] pl-8">
      <button className="flex items-center">
        <svg viewBox="0 0 32 32" className={BAR_ICON} strokeWidth="2">
          <path d="M9 28V4M1 12L9 4L17 12" stroke="#dcdcdc" />
          <path d="M23 4V28M15 20L23 28L31 20" stroke="#4cc2ff" />
        </svg>
        <span className="mr-3 ml-4 pt-0.5">Sort</span>
        <ChevronDown />
      </button>
      <button className="flex items-center">
        <svg viewBox="0 0 32 32" className={BAR_ICON} stroke="#e4e4e4" strokeWidth="2">
          <rect x="5" y="5" width="23" height="18" rx="3" />
          <path d="M4 27H29" />
        </svg>
        <span className="mr-3 ml-4 pt-0.5">View</span>
        <ChevronDown />
      </button>
    </div>
    <button aria-label="See more" className="flex h-16 w-24 items-center justify-center">
      <svg viewBox="0 0 32 32" className="h-8 w-8" fill="#fff">
        <circle cx="3.5" cy="16" r="3" />
        <circle cx="16" cy="16" r="3" />
        <circle cx="28.5" cy="16" r="3" />
      </svg>
    </button>
  </div>
);

const AddressRow: FC = () => (
  <div className="flex items-center pt-2.5 pr-3 pb-2.5">
    <div className="flex w-[273px] items-center pl-[31px]">
      <button aria-label="Back" className="w-6">
        <svg viewBox="0 0 24 24" className="h-6 w-6" fill="none" stroke="#a0a0a0" strokeWidth="2.5">
          <path d="M24 12H1M12 1L1 12L12 23" />
        </svg>
      </button>
      <button aria-label="Forward" className="ml-[46px] w-6">
        <svg viewBox="0 0 24 24" className="h-6 w-6" fill="none" stroke="#a0a0a0" strokeWidth="2.5">
          <path d="M0 12H23M12 1L23 12L12 23" />
        </svg>
      </button>
      <button aria-label="Recent locations" className="ml-[38px] w-5">
        <svg viewBox="0 0 20 20" className="h-5 w-5" fill="none" stroke="#a0a0a0" strokeWidth="2.5">
          <path d="M2 6L10 14L18 6" />
        </svg>
      </button>
      <button aria-label="Up" className="ml-[38px] w-6">
        <svg viewBox="0 0 24 24" className="h-6 w-6" fill="none" stroke="#fff" strokeWidth="2">
          <path d="M12 24V1M1 12L12 1L23 12" />
        </svg>
      </button>
    </div>
    <div className="flex h-[70px] flex-1 items-center border border-[#535353] pl-3.5">
      <SmallFolder />
      <svg viewBox="0 0 12 12" className="mr-3.5 ml-2.5 h-3 w-3" fill="none" stroke="#fff" strokeWidth="2.5">
        <path d="M3 0L9 6L3 12" />
      </svg>
      <a href="#skin-burn-project">Skin burn project</a>
      <svg viewBox="0 0 12 12" className="ml-3.5 h-3 w-3" fill="none" stroke="#fff" strokeWidth="2.5">
        <path d="M3 0L9 6L3 12" />
      </svg>
      <button aria-label="Previous locations" className="ml-auto flex h-full w-[68px] items-center justify-center">
        <svg viewBox="0 0 20 20" className="h-5 w-5" fill="none" stroke="#fff" strokeWidth="2.2">
          <path d="M0 5L10 15L20 5" />
        </svg>
      </button>
      <button aria-label="Refresh" className="flex h-full w-[68px] items-center justify-center">
        <svg viewBox="0 0 24 24" className="h-6 w-6" fill="none" stroke="#fff" strokeWidth="2.2">
          <path d="M20 5A10.5 10.5 0 1 0 22.5 12M22 0V7H15" />
        </svg>
      </button>
    </div>
    <label className="ml-[13px] flex h-[70px] w-[682px] items-center border border-[#535353] pl-7">
      <svg viewBox="0 0 24 24" className="h-6 w-6" fill="none" stroke="#7a7a7a" strokeWidth="2">
        <circle cx="9.5" cy="9.5" r="8" />
        <path d="M15.5 15.5L23 23" />
      </svg>
      <input
        type="search"
        aria-label="Search"
        placeholder="Search Skin burn project"
        className="ml-7 flex-1 bg-transparent pt-0.5 placeholder:text-[#747474] focus:outline-none"
      />
    </label>
  </div>
);

const Sidebar: FC = () => (
  <nav aria-label="Folders" className="w-[318px] shrink-0 border-r-4 border-[#2a2a2a] pt-[21px] whitespace-pre">
    <div className="my-1 mr-0.5 ml-1 flex h-14 items-center bg-[#333333]">
      <button aria-label="Collapse Home" className="flex w-14 justify-center">
        <svg viewBox="0 0 18 18" className="h-[18px] w-[18px]" fill="none" stroke="#d0d0d0" strokeWidth="3">
          <path d="M1 5L9 13L17 5" />
        </svg>
      </button>
      <a href="#home" className="flex items-center gap-1">
        <HomeIcon />
        <span className="pt-0.5">Home</span>
      </a>
    </div>
    <ul>
      {quickAccess.map(({ name, icon, pinned }) => (
        <li key={name}>
          <a href="#folder" className="flex h-16 items-center gap-1 pr-2 pl-[76px]">
            {icon}
            <span className="flex-1 pt-0.5">{name}</span>
            {pinned && <PinIcon />}
          </a>
        </li>
      ))}
    </ul>
    <ul className="mt-2">
      {places.map(({ name, icon }) => (
        <li key={name} className="ml-1 flex h-20 items-center">
          <button aria-label={`Expand ${name}`} className="flex w-14 justify-center">
            <svg viewBox="0 0 18 18" className="h-[18px] w-[18px]" fill="none" stroke="#777" strokeWidth="3">
              <path d="M5 1L13 9L5 17" />
            </svg>
          </button>
          <a href="#place" className="flex items-center gap-1">
            {icon}
            <span className="pt-0.5">{name}</span>
          </a>
        </li>
      ))}
    </ul>
  </nav>
);

const FileGrid: FC = () => (
  <main className="flex-1 pt-[17px] pl-5">
    <ul className="grid grid-cols-[repeat(auto-fill,230px)] gap-y-2.5">
      {files.map(({ name, icon }, index) => (
        <li key={index} className="flex flex-col items-center gap-0.5 text-center">
          {icon}
          <span className="leading-8 whitespace-pre">{name}</span>
        </li>
      ))}
    </ul>
  </main>
);

const StatusBar: FC = () => (
  <footer className="flex h-[46px] items-center bg-[#1e1e1e] pr-2 pl-7">
    <span className="pt-0.5 text-[#e4e4e4]">21 items</span>
    <span className="ml-5 h-[22px] w-0.5 bg-white" />
    <button aria-label="Details view" className="ml-auto px-1.5">
      <svg viewBox="0 0 32 32" className="h-8 w-8">
        <rect width="32" height="32" rx="3" fill="#b2b2b2" />
        <path d="M4 6H28V8H4ZM4 12H28V14H4ZM4 18H28V20H4ZM4 24H28V26H4Z" fill="#000" />
      </svg>
    </button>
    <button
      aria-label="Large icons view"
      className="flex h-full w-11 items-center justify-center border border-[#838383] bg-[#666666]"
    >
      <svg viewBox="0 0 32 32" className="h-8 w-8">
        <rect width="32" height="32" rx="3" fill="#cdcdcd" />
        <rect x="5" y="5" width="22" height="18" rx="1" fill="#fff" stroke="#000" strokeWidth="2" />
        <path d="M4 26H28V28H4Z" fill="#000" />
      </svg>
    </button>
  </footer>
);

const Taskbar: FC = () => (
  <div className="grid h-24 grid-cols-[1fr_auto_1fr] items-center border-t-2 border-[#464646] bg-linear-to-r from-[#202020] from-20% via-[#22202a] to-[#202020] to-85% leading-8">
    <button className="flex items-center gap-4 justify-self-start pl-[38px] text-left">
      <svg viewBox="0 0 46 40" className="h-10 w-[46px]">
        <circle cx="24" cy="20" r="20" fill="url(#sun)" />
        <circle cx="23" cy="19" r="12" fill="url(#haze)" opacity="0.9" />
        <path d="M9 36A9 9 0 1 1 16 21L22 26L26 20A11 11 0 1 1 36 36Z" fill="url(#hazeSide)" opacity="0.92" />
      </svg>
      <span className="flex flex-col pb-1">
        <span>30°C</span>
        <span className="text-[#c8c8c8]">Haze</span>
      </span>
    </button>
    <div className="flex gap-2">
      {apps.map(({ name, icon, state }) =>
        state === "active" ? (
          <button
            key={name}
            aria-label={name}
            className="relative flex h-20 w-20 items-center justify-center rounded-lg border border-[#3a3942] bg-[#2e2d35]"
          >
            {icon}
            <span className="absolute bottom-0.5 h-1.5 w-8 rounded-full bg-[#f5826b]" />
          </button>
        ) : (
          <button key={name} aria-label={name} className="relative flex h-20 w-20 items-center justify-center">
            {icon}
            {state === "open" && <span className="absolute bottom-0.5 h-1.5 w-3 rounded-full bg-[#9a999e]" />}
          </button>
        )
      )}
    </div>
    <div className="flex items-center justify-self-end pr-[35px]">
      <button aria-label="Show hidden icons">
        <svg viewBox="0 0 26 16" className="h-4 w-[26px]" fill="none" stroke="#fff" strokeWidth="2">
          <path d="M1 14L13 2L25 14" />
        </svg>
      </button>
      <button aria-label="OneDrive" className="ml-[19px]">
        <svg viewBox="0 0 32 32" className="h-8 w-8">
          <path d="M8 11A9 9 0 0 1 25 12L12 20Z" fill="#8d8d90" />
          <path d="M7 26A7 7 0 1 1 12 11.5L24 19Z" fill="#bdbdbf" />
          <path d="M19 15Q24 11 28 14A6.500 6.500 0 0 1 30 24L18 20Z" fill="#dcdcdd" />
          <path d="M2 23.5L19 16L31 22.5Q30 26.5 26 26.5H7Q4 26 2 23.5Z" fill="#fff" />
        </svg>
      </button>
      <button className="ml-7 flex w-12 flex-col items-center">
        <span>ENG</span>
        <span>IN</span>
      </button>
      <button aria-label="Network, volume and battery" className="ml-9 flex gap-4">
        <svg viewBox="0 0 32 32" className="h-8 w-8" fill="none" stroke="#fff" strokeWidth="2">
          <path d="M1 13Q16 -2 31 13M5.5 17.5Q16 7 26.5 17.5M10 22Q16 15.5 22 22" />
          <circle cx="16" cy="25" r="2.5" fill="#fff" stroke="none" />
        </svg>
        <svg viewBox="0 0 32 32" className="h-8 w-8" fill="none" stroke="#fff" strokeWidth="2">
          <path d="M1 12H6L13 6V26L6 20H1ZM17 12Q20 16 17 20M21 8Q27 16 21 24M25 4Q35 16 25 28" />
        </svg>
        <svg viewBox="0 0 32 32" className="h-8 w-8" fill="none" stroke="#fff" strokeWidth="2">
          <rect x="1" y="7" width="26" height="18" rx="4" />
          <rect x="5" y="11" width="18" height="10" rx="1" fill="#fff" stroke="none" />
          <path d="M28 13H31V19H28Z" fill="#fff" stroke="none" />
        </svg>
      </button>
      <button className="ml-6 flex items-center gap-3">
        <span className="flex w-[124px] flex-col items-end pb-1 whitespace-nowrap">
          <span>05:51 PM</span>
          <span>16-10-2022</span>
        </span>
        <span className="flex h-8 w-[39px] items-center justify-center rounded-full bg-[#f5826b] text-[#1c1c1c]">
          24
        </span>
      </button>
    </div>
  </div>
);

const App: FC = () => (
  <div className="flex min-h-screen flex-col bg-[#191919] font-['Open_Sans','Noto_Sans',sans-serif] text-[23px] leading-8 text-white">
    <Gradients />
    <header className="border-b-2 border-[#3c3c3c] bg-linear-to-r from-[#202020] from-30% via-[#232124] to-[#202020] to-80%">
      <TitleBar />
      <CommandBar />
    </header>
    <AddressRow />
    <div className="flex flex-1">
      <Sidebar />
      <FileGrid />
    </div>
    <StatusBar />
    <Taskbar />
  </div>
);

export default App;
